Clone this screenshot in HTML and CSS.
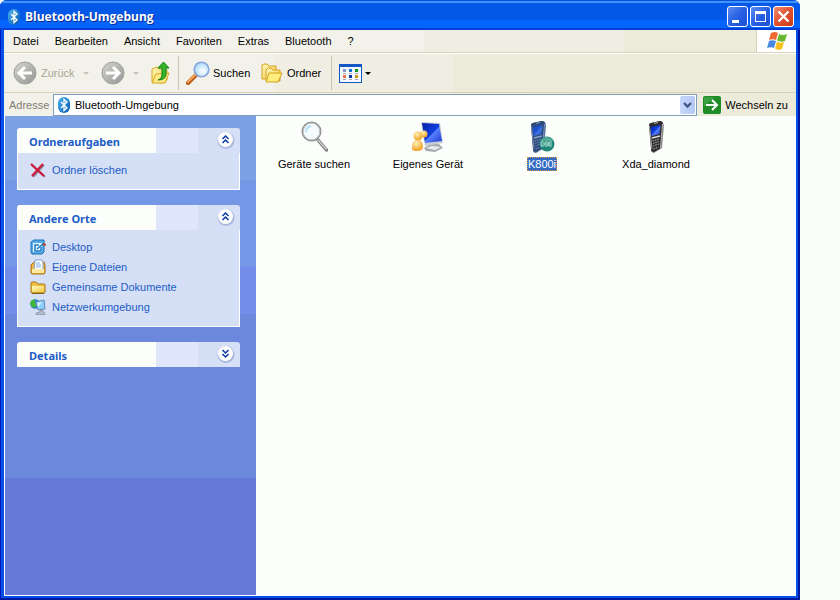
FILE: index.html
```html
<!DOCTYPE html>
<html lang="de">
<head>
<meta charset="utf-8">
<title>Bluetooth-Umgebung</title>
<link rel="stylesheet" href="styles.css">
</head>
<body>
<svg class="defs" aria-hidden="true">
  <defs>
    <linearGradient id="gBlue" x1="0" y1="0" x2="1" y2="1"><stop offset="0" stop-color="#4ab8f0"/><stop offset="1" stop-color="#0454b0"/></linearGradient>
    <linearGradient id="gGrey" x1="0" y1="0" x2="1" y2="1"><stop offset="0" stop-color="#d4d4d0"/><stop offset="1" stop-color="#949492"/></linearGradient>
    <linearGradient id="gFolder" x1="0" y1="0" x2="1" y2="1"><stop offset="0" stop-color="#fffac0"/><stop offset="1" stop-color="#f2c840"/></linearGradient>
    <linearGradient id="gScreen" x1="0" y1="0" x2="1" y2="1"><stop offset="0" stop-color="#0820a8"/><stop offset=".5" stop-color="#1040e0"/><stop offset=".55" stop-color="#5880ff"/><stop offset="1" stop-color="#1838d0"/></linearGradient>
    <radialGradient id="gLens" cx=".6" cy=".6" r=".6"><stop offset="0" stop-color="#ffffff"/><stop offset="1" stop-color="#a8dcfa"/></radialGradient>
    <radialGradient id="gGold" cx=".4" cy=".3" r=".7"><stop offset="0" stop-color="#fff0b8"/><stop offset="1" stop-color="#f0a020"/></radialGradient>
    <symbol id="bt" viewBox="0 0 14 16">
      <rect x="1" y="0" width="12" height="16" rx="6" fill="url(#gBlue)"/>
      <path d="M4 5l6 6-3 2.500V2.500L10 5l-6 6" fill="none" stroke="#fff" stroke-width="1.300"/>
    </symbol>
    <symbol id="folder" viewBox="0 0 16 16">
      <path d="M1 13V4q0-1 1-1h4l2 2h6q1 0 1 1v7q0 1-1 1H2q-1 0-1-1z" fill="#f0c040" stroke="#a87818"/>
      <path d="M2 13V7h12v6z" fill="url(#gFolder)"/>
      <path d="M2 14.500h12" stroke="#806020"/>
    </symbol>
    <symbol id="up" viewBox="0 0 18 18">
      <circle cx="9" cy="9.500" r="8.500" fill="#8e9fd0" opacity=".6"/>
      <circle cx="8.500" cy="8.500" r="7.500" fill="#fff"/>
      <path d="M5.500 8l3-3 3 3M5.500 12l3-3 3 3" fill="none" stroke="#0838a0" stroke-width="1.500"/>
    </symbol>
    <symbol id="phone" viewBox="0 0 20 32">
      <path d="M4 2L13 0q3 1 4 4l-2 23-8 5q-2 0-3-2z" fill="#8c8c8c"/>
      <path d="M2 4q0-2 2-2l9-2q3 0 3 3l-2 24-7 4q-3 0-3-3z" fill="#2c2c2c"/>
      <path d="M2.500 5L5 28" stroke="#a8a8a8"/>
      <path d="M15.500 3l-2 24" stroke="#c0c0c0"/>
      <path d="M7 2.500l4-1" stroke="#bbb"/>
      <path d="M3.500 6l10-2-1 9-8 2z" fill="url(#gScreen)"/>
      <path d="M5 17l8-2" stroke="#ddd" stroke-width="1.500"/>
      <path d="M5.500 20l7-2M6 22.500l6-2M6 25l6-2M6.500 28l5-2" stroke="#989898" stroke-width="1.300" stroke-dasharray="1.600 .8"/>
    </symbol>
  </defs>
</svg>

<div class="window">
  <header class="titlebar">
    <svg class="title-icon" viewBox="0 0 14 16"><use href="#bt"/></svg>
    <h1>Bluetooth-Umgebung</h1>
    <div class="window-buttons">
      <button aria-label="Minimieren"><svg viewBox="0 0 19 19"><path d="M4 13h7v3H4z" fill="#fff"/></svg></button>
      <button aria-label="Maximieren"><svg viewBox="0 0 19 19"><path d="M4 4h11v11H4z M5 7v7h9V7z" fill="#fff" fill-rule="evenodd"/></svg></button>
      <button class="close" aria-label="Schließen"><svg viewBox="0 0 19 19"><path d="M4.500 4.500l10 10M14.500 4.500l-10 10" stroke="#fff" stroke-width="2.400"/></svg></button>
    </div>
  </header>

  <nav class="menubar">
    <button>Datei</button><button>Bearbeiten</button><button>Ansicht</button><button>Favoriten</button><button>Extras</button><button>Bluetooth</button><button>?</button>
    <span class="flag">
      <svg viewBox="0 0 20 18">
        <path d="M4 1q4-2 7 0L9 8Q6 6.500 2 8z" fill="#ee6a30"/>
        <path d="M12 2q4 2 8 0l-2 7q-4 1.500-8-.5z" fill="#68b830"/>
        <path d="M2 9q3-1.500 7 0l-2 7q-3-1.500-7 0z" fill="#4888e0"/>
        <path d="M10 9.500q3 2 7 .5l-2 7q-4 2-7-.5z" fill="#f8c020"/>
      </svg>
    </span>
  </nav>

  <div class="toolbar">
    <button class="tool back" disabled>
      <svg class="round" viewBox="0 0 24 24"><circle cx="12" cy="12" r="11" fill="url(#gGrey)" stroke="#a0a09c"/><path d="M19 12H7M12 6l-6 6 6 6" fill="none" stroke="#fff" stroke-width="3"/></svg>
      <span>Zurück</span>
      <i class="caret"></i>
    </button>
    <button class="tool forward" aria-label="Vorwärts" disabled>
      <svg class="round" viewBox="0 0 24 24"><circle cx="12" cy="12" r="11" fill="url(#gGrey)" stroke="#a0a09c"/><path d="M5 12h12M12 6l6 6-6 6" fill="none" stroke="#fff" stroke-width="3"/></svg>
      <i class="caret"></i>
    </button>
    <button class="tool" aria-label="Aufwärts">
      <svg class="up-icon" viewBox="0 0 20 24"><path d="M1 21V8l5-2 2 2 8 1v10l-4 3z" fill="url(#gFolder)" stroke="#d8a820"/><path d="M1 22l4-9 13-1-4 10z" fill="#ffe888" stroke="#d8a820"/><path d="M7 19q4-1 4-5V7H7l5.500-6L18 7h-3v6q0 6-8 6z" fill="#38b428" stroke="#148414"/></svg>
    </button>
    <i class="divider"></i>
    <button class="tool search">
      <svg class="round" viewBox="0 0 24 24"><path d="M2 22l8-8" stroke="#b85818" stroke-width="4" stroke-linecap="round"/><path d="M2 21l8-8" stroke="#f8a858" stroke-width="2" stroke-linecap="round"/><circle cx="15.500" cy="8.500" r="7.300" fill="url(#gLens)" stroke="#88a4dc" stroke-width="1.600"/></svg>
      <span>Suchen</span>
    </button>
    <button class="tool folders">
      <svg class="round" viewBox="0 0 24 24"><path d="M2 18V4l2-1h3l2 2h7v13z" fill="url(#gFolder)" stroke="#d8a020"/><path d="M6 20V9l2-2h3l2 2h7v11z" fill="url(#gFolder)" stroke="#d8a020"/><path d="M6 21l3-9h13l-4 9z" fill="#ffed80" stroke="#d8a020"/></svg>
      <span>Ordner</span>
    </button>
    <i class="divider"></i>
    <button class="tool views" aria-label="Ansichten">
      <svg class="view-icon" viewBox="0 0 23 19"><path d="M0 0h23v19H0z" fill="#1458c8"/><path d="M1 3h21v15H1z" fill="#f4f9ff"/><path d="M4 5h3v3H4z" fill="#8c98d0"/><path d="M10 5h3v3h-3z" fill="#1070d8"/><path d="M16 5h3v3h-3z" fill="#18941c"/><path d="M4 11h3v3H4z" fill="#f07050"/><path d="M10 11h3v3h-3z" fill="#0838a0"/><path d="M16 11h3v3h-3z" fill="#c89810"/><path d="M4 9.500h3m3 0h3m3 0h3M4 15.500h3m3 0h3m3 0h3" stroke="#a8a8a8"/></svg>
      <i class="caret"></i>
    </button>
  </div>

  <div class="addressbar">
    <label for="address">Adresse</label>
    <div class="combo">
      <svg class="address-icon" viewBox="0 0 14 16"><use href="#bt"/></svg>
      <input id="address" type="text" value="Bluetooth-Umgebung">
      <button class="drop" aria-label="Adressliste öffnen"><svg viewBox="0 0 15 17"><path d="M4 6l3.500 3.500L11 6" fill="none" stroke="#405888" stroke-width="2.400"/></svg></button>
    </div>
    <button class="go">
      <svg viewBox="0 0 18 18"><rect width="18" height="18" rx="2" fill="#208c28"/><path d="M1 1h10L1 11z" fill="#58b858" opacity=".5"/><path d="M3 9h10M9 4l5 5-5 5" fill="none" stroke="#fff" stroke-width="2"/></svg>
      <span>Wechseln zu</span>
    </button>
  </div>

  <div class="content">
    <aside class="sidebar">
      <section class="panel">
        <header><h2>Ordneraufgaben</h2><button aria-label="Einklappen"><svg viewBox="0 0 18 18"><use href="#up"/></svg></button></header>
        <ul>
          <li><a href="#"><svg viewBox="0 0 16 16"><path d="M2 3l13 12M14 3L3 15" stroke="#888fa8" stroke-width="2"/><path d="M1 2l13 12M13 2L2 14" stroke="#d01838" stroke-width="2.200"/></svg>Ordner löschen</a></li>
        </ul>
      </section>
      <section class="panel">
        <header><h2>Andere Orte</h2><button aria-label="Einklappen"><svg viewBox="0 0 18 18"><use href="#up"/></svg></button></header>
        <ul>
          <li><a href="#"><svg viewBox="0 0 16 16"><path d="M1 3l3-2h10v12l-2 2H2l-1-2z" fill="#58a8e8" stroke="#1870b8"/><path d="M3 4h9v9H3z" fill="#e8f6ff"/><path d="M11 8v4H5V6h4M7 10l7-6" fill="none" stroke="#1878c8" stroke-width="1.500"/><path d="M13 5l3 1" stroke="#c04820" stroke-width="2"/></svg>Desktop</a></li>
          <li><a href="#"><svg viewBox="0 0 16 16"><path d="M1 6l3-3h10l1 3v8l-1 1H2l-1-1z" fill="#f0b840" stroke="#a87010"/><path d="M5 1h7l1 2v8H4z" fill="#fff" stroke="#80a0d0"/><path d="M6 4h4M6 6h5M6 8h5" stroke="#78b0e8"/><path d="M2 10h12v4H2z" fill="#ffe8a0"/></svg>Eigene Dateien</a></li>
          <li><a href="#"><svg viewBox="0 0 16 16"><use href="#folder"/></svg>Gemeinsame Dokumente</a></li>
          <li><a href="#"><svg viewBox="0 0 16 16"><circle cx="5" cy="5" r="4.800" fill="#3080d8"/><path d="M0 4q2-4 5-3.500L5 4l2 2-3 3q-3-1-4-5z" fill="#40b838"/><path d="M6 3l8-2 1 9-7 1z" fill="#8cd0f8" stroke="#6888b8"/><path d="M7 4l5-1-4 5z" fill="#d8f4ff"/><path d="M10 11h3v2l2 1v1.500H6V14l4-1z" fill="#b8bcc8" stroke="#707890" stroke-width=".5"/></svg>Netzwerkumgebung</a></li>
        </ul>
      </section>
      <section class="panel collapsed">
        <header><h2>Details</h2><button aria-label="Ausklappen"><svg viewBox="0 0 18 18"><circle cx="9" cy="9.500" r="8.500" fill="#8e9fd0" opacity=".6"/><circle cx="8.500" cy="8.500" r="7.500" fill="#fff"/><path d="M5.500 5l3 3 3-3M5.500 9l3 3 3-3" fill="none" stroke="#0838a0" stroke-width="1.500"/></svg></button></header>
      </section>
    </aside>

    <main class="files">
      <button class="file">
        <svg viewBox="0 0 32 32"><path d="M20 19l8.500 10" stroke="#777" stroke-width="3.400" stroke-linecap="round"/><path d="M20 19l8 9" stroke="#d0d0d0" stroke-width="1.500" stroke-linecap="round"/><circle cx="13.500" cy="10.500" r="9" fill="#f4fbff" stroke="#888" stroke-width="2"/><circle cx="13.500" cy="10.500" r="8.500" fill="none" stroke="#ccc"/><path d="M8 11q0-5 5-6" fill="none" stroke="#b8e0f4" stroke-width="2"/></svg>
        <span>Geräte suchen</span>
      </button>
      <button class="file">
        <svg viewBox="0 0 32 32"><path d="M12 27l6-4h9l4 4-8 4-9-1z" fill="#a8acb0"/><path d="M14 27l6-2 9 1-6 3z" fill="#ececec"/><path d="M9 1l19 1 3 20-18 3z" fill="#c8ccd4"/><path d="M10 2l17 1 3 17-17 2z" fill="url(#gScreen)"/><circle cx="6" cy="15" r="4.500" fill="url(#gGold)"/><path d="M0 26q0-7 5.500-7t5.500 7q0 4-6 4t-5-4z" fill="url(#gGold)"/><circle cx="12" cy="13" r="3.500" fill="url(#gGold)"/></svg>
        <span>Eigenes Gerät</span>
      </button>
      <button class="file selected">
        <svg viewBox="0 0 32 32"><use href="#phone" x="3" width="20" height="32"/><path d="M5 4q0-2 2-2l9-2q4 0 4 4l-2 23-8 5q-3 0-3-3z" fill="#316ac5" opacity=".5"/><ellipse cx="21" cy="23" rx="7.500" ry="7.500" fill="#208878"/><path d="M14 20q7-8 14 0z" fill="#58a898"/><path d="M18 21h-3v4h3M19 21h3v4h-3zM26 21h-3v4h3M16 23h10" fill="none" stroke="#a8dccc"/></svg>
        <span>K800i</span>
      </button>
      <button class="file">
        <svg viewBox="0 0 32 32"><use href="#phone" x="7" width="20" height="32"/></svg>
        <span>Xda_diamond</span>
      </button>
    </main>
  </div>
</div>
</body>
</html>
```

FILE: styles.css
```css
* { box-sizing: border-box; }

body {
  margin: 0;
  padding-right: 40px;
  background: #fbfdfb;
  color: #000;
  font: 11px/14px Tahoma, "Liberation Sans", Arial, sans-serif;
}

button, input {
  margin: 0;
  padding: 0;
  border: 0;
  background: none;
  color: inherit;
  font: inherit;
}

h1, h2, ul { margin: 0; padding: 0; }
ul { list-style: none; }
a { color: #215dc6; text-decoration: none; }
svg { display: block; flex: none; }
.defs { position: absolute; width: 0; height: 0; }

.window {
  display: flex;
  flex-direction: column;
  min-height: 100vh;
  padding: 0 4px 4px;
  border-radius: 7px 7px 0 0;
  background: #0450e8;
  box-shadow: inset 1px 0 #0018c0, inset -2px -2px #0018a0;
}

.titlebar {
  display: flex;
  align-items: center;
  height: 30px;
  margin: 0 -4px;
  padding: 3px 6px 0 7px;
  border-radius: 7px 7px 0 0;
  background: linear-gradient(#0850d8 0 1px, #3c94fc 1px 3px, #0458e8 3px 20px, #0464fc 20px 28px, #0440d8 28px);
}

.title-icon { width: 14px; height: 16px; }

.titlebar h1 {
  flex: 1;
  margin-left: 4px;
  padding-top: 1px;
  color: #fff;
  font: bold 12px/16px "Open Sans", "Trebuchet MS", sans-serif;
  text-shadow: 1px 1px #0a2a90;
}

.window-buttons { display: flex; gap: 2px; }

.window-buttons button {
  width: 21px;
  height: 21px;
  border: 1px solid #fff;
  border-radius: 3px;
  background: linear-gradient(135deg, #5c8cf4, #2860e4 50%, #1c50d0);
}

.window-buttons .close { background: linear-gradient(135deg, #f09070, #e05030 50%, #c83c18); }

.menubar {
  display: flex;
  gap: 16px;
  height: 23px;
  padding-left: 9px;
  border-bottom: 1px solid #d8d0b8;
  background: linear-gradient(90deg, #f3f2ea 0 420px, #f0ede3 420px 620px, #ecead9 620px);
}

.flag {
  display: grid;
  place-items: center;
  width: 40px;
  margin-left: auto;
  border-left: 1px solid #d8d0b8;
  background: #fff;
}

.flag svg { width: 20px; height: 18px; }

.toolbar {
  display: flex;
  align-items: center;
  height: 40px;
  padding-left: 9px;
  border-top: 1px solid #fff;
  border-bottom: 1px solid #d8d0b8;
  background: linear-gradient(90deg, #f3f2ea 0 270px, #f0ede3 270px 450px, #ecead9 450px);
}

.tool { display: flex; align-items: center; gap: 4px; }
.tool:disabled { color: #a7a694; }
.tool:disabled .caret { color: #c4c2b4; }
.round { width: 24px; height: 24px; }
.up-icon { width: 20px; height: 24px; }
.view-icon { width: 23px; height: 19px; }

.caret {
  border: 3px solid transparent;
  border-top-color: currentColor;
  border-bottom: 0;
}

.back { width: 88px; }
.back .caret { margin-left: 4px; }
.forward { width: 50px; gap: 8px; }

.divider {
  align-self: stretch;
  width: 1px;
  margin: 2px 7px;
  background: #c8c5b2;
}

.search { width: 74px; gap: 3px; }
.folders { width: 64px; gap: 3px; }
.views { gap: 3px; }

.addressbar {
  display: flex;
  height: 23px;
  padding: 1px 8px 0 5px;
  background: linear-gradient(90deg, #f3f2ea, #ecead9);
}

.addressbar label {
  width: 44px;
  padding-top: 4px;
  color: #7f7c73;
}

.combo {
  display: flex;
  flex: 1;
  align-items: center;
  min-width: 0;
  padding: 0 1px 0 3px;
  border: 1px solid #7f9db9;
  background: #fff;
}

.address-icon { width: 14px; height: 16px; }
.combo input { flex: 1; min-width: 0; margin-left: 4px; outline: 0; }

.drop {
  width: 15px;
  height: 18px;
  border-radius: 2px;
  background: linear-gradient(90deg, #c8d8fc, #b4c8f4);
}

.go { display: flex; align-items: center; gap: 4px; margin-left: 6px; }
.go svg { width: 18px; height: 18px; }

.content {
  display: flex;
  flex: 1;
  border-left: 1px solid #fff;
  border-bottom: 1px solid #fff;
  background: #fcfefc;
}

.sidebar {
  display: flex;
  flex-direction: column;
  gap: 15px;
  width: 251px;
  padding: 12px 16px 12px 12px;
  background: linear-gradient(#7ca1e4 0 64px, #7498e5 64px 150px, #728eea 150px 198px, #6c88dc 198px 362px, #6479d8 362px);
}

.panel header {
  display: flex;
  justify-content: space-between;
  height: 25px;
  padding: 3px 5px 0 12px;
  border-radius: 3px 3px 0 0;
  background: linear-gradient(90deg, #fcfefc 0 139px, #e0e6fb 139px 181px, #d5dff5 181px);
}

.panel h2 {
  padding-top: 4px;
  color: #215dc6;
  font: bold 11px/14px "Noto Sans", Tahoma, sans-serif;
}

.panel header button { height: 18px; }
.panel header svg { width: 18px; height: 18px; }

.panel ul {
  padding: 7px 12px 9px;
  border: 1px solid #fff;
  border-top: 0;
  background: #d5dff5;
}

.panel li { height: 20px; }
.panel a { display: flex; align-items: center; gap: 6px; height: 20px; }
.panel a svg { width: 16px; height: 16px; }

.files {
  display: grid;
  grid-template-columns: repeat(auto-fill, 114px);
  align-content: start;
  flex: 1;
  padding: 5px 0 0 1px;
}

.file { display: flex; flex-direction: column; align-items: center; gap: 4px; }
.file svg { width: 32px; height: 32px; }
.file span { padding: 0 1px; }

.selected span {
  outline: 1px dotted #e09840;
  outline-offset: -1px;
  background: #316ac5;
  color: #fff;
}
```
